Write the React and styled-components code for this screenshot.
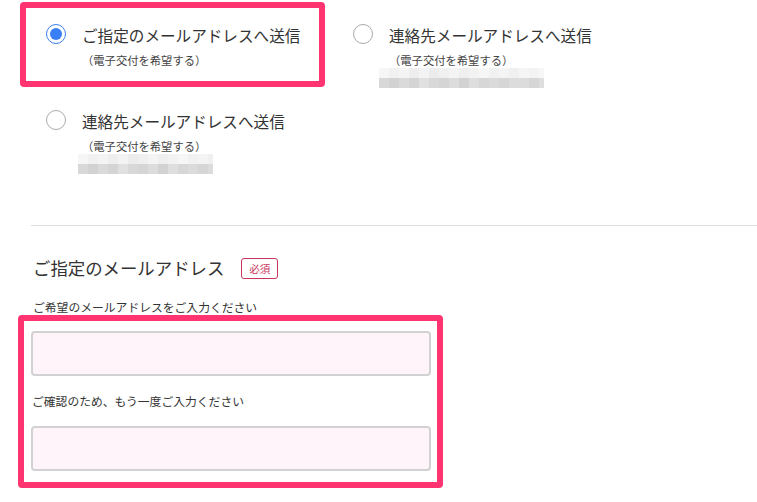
import React from 'react'
import styled, { createGlobalStyle } from 'styled-components'

const GlobalStyle = createGlobalStyle`
    body {
        margin: 0;
        background: #fff;
        font-family: "Noto Sans CJK JP", "Noto Sans", sans-serif;
        color: #333;
    }
`
const Page = styled.div`
    width: 757px;
    height: 502px;
    overflow: hidden;
    padding-top: 2px;
    box-sizing: border-box;
`
const Options = styled.div`
    display: grid;
    grid-template-columns: 305px 305px;
    grid-template-rows: 85px auto;
    column-gap: 2px;
    row-gap: 1px;
    margin-left: 20px;
    align-items: start;
`
const Card = styled.label`
    display: flex;
    align-items: flex-start;
    gap: 16px;
    box-sizing: border-box;
    min-height: 85px;
    padding: 16px 14px 10px 20px;
    border: 6px solid ${p => (p.$active ? '#ff3471' : 'transparent')};
    border-radius: 4px;
`
const Radio = styled.span`
    flex: none;
    width: 20px;
    height: 20px;
    box-sizing: border-box;
    border-radius: 50%;
    border: 1px solid ${p => (p.$checked ? '#3a7ff6' : '#a9a9a9')};
    display: flex;
    align-items: center;
    justify-content: center;
    &::after {
        content: '';
        width: 12px;
        height: 12px;
        border-radius: 50%;
        background: ${p => (p.$checked ? '#3a7ff6' : 'transparent')};
    }
`
const Texts = styled.div`
    display: flex;
    flex-direction: column;
`
const Title = styled.span`
    font-size: 15.6px;
    line-height: 22px;
    color: #333;
    white-space: nowrap;
`
const Sub = styled.span`
    margin-top: 6px;
    font-size: 11.3px;
    line-height: 16px;
    color: #444;
    white-space: nowrap;
`
const Blur = styled.svg`
    display: block;
    margin-left: ${p => p.$shift}px;
`
const Divider = styled.hr`
    margin: 35px 0 0 31px;
    border: none;
    border-top: 1.5px solid #dedede;
`
const Section = styled.div`
    padding-left: 33px;
`
const HeadRow = styled.div`
    display: flex;
    align-items: center;
    gap: 17px;
    margin-top: 30px;
`
const Heading = styled.h2`
    margin: 0;
    font-size: 17.4px;
    font-weight: 400;
    line-height: 24px;
    color: #333;
`
const Badge = styled.span`
    display: inline-flex;
    align-items: center;
    justify-content: center;
    width: 37px;
    height: 21px;
    box-sizing: border-box;
    border: 1px solid #c8355c;
    border-radius: 3px;
    font-size: 10.5px;
    color: #c8355c;
`
const Label = styled.div`
    font-size: 11.8px;
    line-height: 16px;
    color: #333;
    margin: ${p => p.$m};
    padding-left: ${p => p.$pl || 0}px;
`
const FieldBox = styled.div`
    width: 425px;
    box-sizing: border-box;
    margin-left: 18px;
    border: 6px solid #ff3471;
    border-radius: 4px;
    padding: 10px 6px 11px 7px;
`
const Input = styled.input`
    display: block;
    width: 400px;
    height: 45px;
    box-sizing: border-box;
    border: 2px solid #d2d2d2;
    border-radius: 4px;
    background: #fff4fa;
    outline: none;
`

const shades = [
    [246, 241, 244, 238, 243, 236, 240, 244, 239, 242, 246, 241, 244, 240, 245, 243, 247],
    [220, 214, 222, 216, 210, 218, 212, 224, 216, 213, 220, 210, 222, 215, 219, 214, 220]
]

const Mosaic = ({ width, shift }) => {
    const cols = Math.ceil(width / 10)
    return (
        <Blur width={width} height={20} $shift={shift}>
            {shades.map((row, r) =>
                Array.from({ length: cols }).map((_, c) => {
                    const v = row[(c + r * 3) % row.length]
                    return <rect key={r + '-' + c} x={c * 10} y={r * 10} width={10} height={10} fill={`rgb(${v},${v},${v})`} />
                })
            )}
        </Blur>
    )
}

const Option = ({ active, title, blur, shift }) => (
    <Card $active={active}>
        <Radio $checked={active} />
        <Texts>
            <Title>{title}</Title>
            <Sub>（電子交付を希望する）</Sub>
            {blur && <Mosaic width={blur} shift={shift} />}
        </Texts>
    </Card>
)

const App = () => (
    <Page>
        <GlobalStyle />
        <Options>
            <Option active title="ご指定のメールアドレスへ送信" />
            <Option title="連絡先メールアドレスへ送信" blur={165} shift={-10} />
            <Option title="連絡先メールアドレスへ送信" blur={135} shift={-4} />
        </Options>
        <Divider />
        <Section>
            <HeadRow>
                <Heading>ご指定のメールアドレス</Heading>
                <Badge>必須</Badge>
            </HeadRow>
            <Label $m="19px 0 0 0">ご希望のメールアドレスをご入力ください</Label>
        </Section>
        <FieldBox>
            <Input type="email" />
            <Label $m="17px 0 17px 0" $pl={1}>ご確認のため、もう一度ご入力ください</Label>
            <Input type="email" />
        </FieldBox>
    </Page>
)

export default App
